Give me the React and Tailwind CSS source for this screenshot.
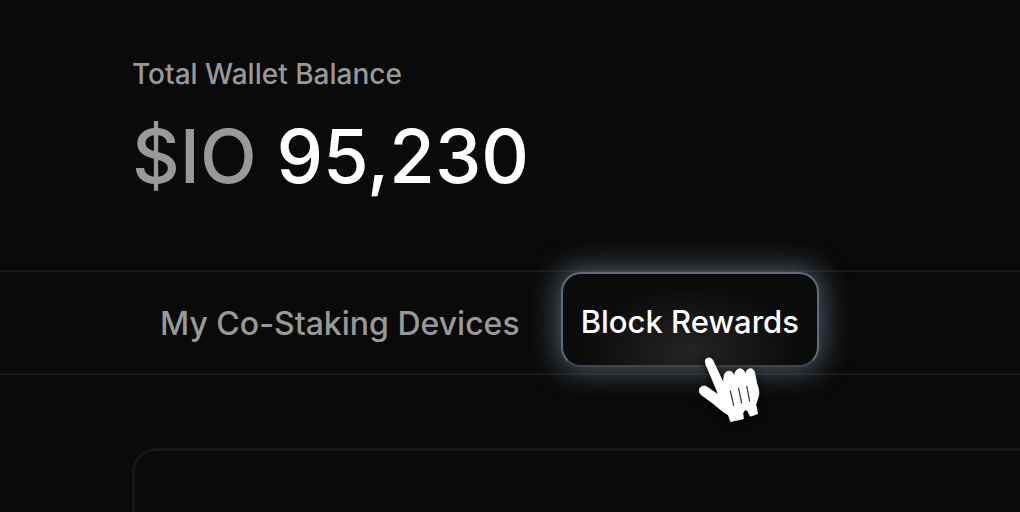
function PointerHand() {
  return (
    <svg
      aria-hidden="true"
      viewBox="0 0 100 90"
      className="pointer-events-none absolute top-[73px] left-[119px] h-[90px] w-[100px] drop-shadow-[0_2px_4px_rgba(0,0,0,0.9)]"
    >
      <path
        d="M25.3 16C25.3 12.4 31 11.8 32.8 15.4L43.4 37.8L44 31.5C44.4 25.4 51.4 24.4 53.4 29L54.4 31.2L55 28.4C56.2 22.6 63 22.4 64.8 27.6L65.4 29.8L66 27.6C67.2 22.4 73.8 22.4 74.6 27.6L76.8 38.6C79.2 45 79.4 49 77.8 53.4L75.8 59.4L77.6 68.8L70.4 71.2L67.4 65.4L65 64.8L62.8 68L63.4 73.8L50.6 76.6L48.4 70C43 67 37.4 62 32.8 58.2L21 49.6C17.6 46 19.6 41 24.4 41C27.8 41.4 32.6 46.8 38.4 49.2L25.9 19.4Z"
        fill="#fff"
        stroke="#fff"
        strokeWidth="0.8"
        strokeLinejoin="round"
      />
      <path
        d="M50.4 46L53.6 60.4M58.6 43.4L61.6 58M66.8 41.4L69.6 56"
        fill="none"
        stroke="#444"
        strokeWidth="1.3"
        strokeLinecap="round"
      />
    </svg>
  );
}

export default function App() {
  return (
    <main className="flex min-h-screen flex-col overflow-hidden bg-[#0a0a0a] font-['Inter',sans-serif]">
      <header className="px-[132px] pt-14">
        <h1 className="text-[28px] leading-9 font-medium text-[#999]">Total Wallet Balance</h1>
        <p className="mt-5 text-[74px] leading-[88px] font-medium text-white">
          <span className="text-[#999]">$IO</span> 95,230
        </p>
      </header>

      <nav
        aria-label="Wallet sections"
        className="mt-[70px] flex h-[105px] items-start gap-[25px] border-y-2 border-[#191919] pl-36 font-medium whitespace-nowrap"
      >
        <button type="button" className="h-[103px] px-4 text-[32px] text-[#999]">
          My Co-Staking Devices
        </button>
        <div className="relative">
          <button
            type="button"
            aria-current="page"
            className="h-[95px] rounded-[20px] border-2 border-[#5f6b79] border-b-[#3c4652] bg-[#0b0b0b] bg-[radial-gradient(ellipse_at_50%_85%,#242424_0%,#0b0b0b_60%)] px-[18px] pt-1.5 text-[31px] text-white shadow-[0_0_28px_5px_rgba(125,145,170,0.55)]"
          >
            Block Rewards
          </button>
          <PointerHand />
        </div>
      </nav>

      <section
        aria-label="Wallet details"
        className="mt-[73px] ml-[132px] grow rounded-tl-[24px] border-t-[3px] border-l-[3px] border-[#171717]"
      />
    </main>
  );
}
